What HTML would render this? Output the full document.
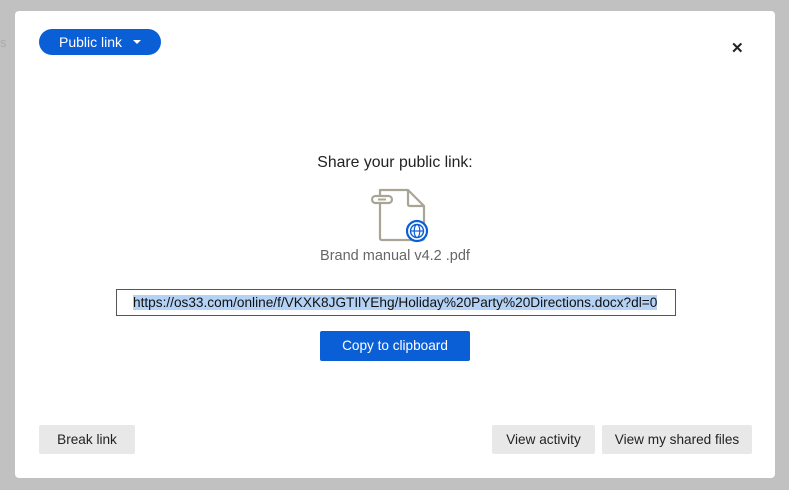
<!DOCTYPE html>
<html><head><meta charset="utf-8"><style>
html,body{margin:0;padding:0;}
body{width:789px;height:490px;background:#c1c1c1;position:relative;overflow:hidden;font-family:"Liberation Sans",sans-serif;}
.bgs{position:absolute;left:0;top:35px;color:#aaa;font-size:13px;}
.modal{position:absolute;left:15px;top:11px;width:760px;height:467px;background:#fff;border-radius:4px;}
.pill{position:absolute;left:24px;top:18px;width:122px;height:26px;border-radius:13px;background:#0b5fd6;color:#fff;font-size:14px;line-height:26px;}
.pill span{position:absolute;left:20px;}
.pill i{position:absolute;left:94px;top:11px;width:0;height:0;border-left:4px solid transparent;border-right:4px solid transparent;border-top:4px solid #fff;}
.x{position:absolute;left:716px;top:30px;font-size:15px;font-weight:bold;color:#222;line-height:16px;}
.t{position:absolute;left:0;width:760px;text-align:center;}
.url{position:absolute;left:101px;top:278px;width:560px;height:27px;border:1px solid #555;box-sizing:border-box;font-size:13.65px;line-height:25px;color:#111;}
.url span{background:#b4d2f5;margin-left:16px;}
.copy{position:absolute;left:305px;top:320px;width:150px;height:30px;background:#0b5fd6;color:#fff;font-size:13.6px;line-height:30px;text-align:center;border-radius:2px;}
.btn{position:absolute;top:414px;height:29px;background:#e8e8e8;color:#222;font-size:13.6px;line-height:29px;text-align:center;border-radius:2px;}
</style></head><body>
<div class="bgs">s</div>
<div class="modal">
<div class="pill"><span>Public link</span><i></i></div>
<div class="x">✕</div>
<div class="t" style="top:143px;font-size:15.8px;color:#222;">Share your public link:</div>
<svg style="position:absolute;left:355px;top:174px" width="60" height="60" viewBox="0 0 60 60">
<path d="M10 5 H38 L54 21 V53 Q54 55 52 55 H12 Q10 55 10 53 Z" fill="none" stroke="#a8a596" stroke-width="2.2" stroke-linejoin="round"/>
<path d="M38 5 V19 Q38 21 40 21 H54" fill="none" stroke="#a8a596" stroke-width="2.2"/>
<rect x="2" y="11" width="20" height="7" rx="3.5" fill="#fff" stroke="#a8a596" stroke-width="2.2"/>
<line x1="8" y1="14.5" x2="16" y2="14.5" stroke="#a8a596" stroke-width="2"/>
<circle cx="47" cy="46" r="10" fill="#fff" stroke="#0b5fd6" stroke-width="2.2"/>
<circle cx="47" cy="46" r="6.5" fill="none" stroke="#0b5fd6" stroke-width="1.4"/>
<ellipse cx="47" cy="46" rx="2.8" ry="6.5" fill="none" stroke="#0b5fd6" stroke-width="1.2"/>
<line x1="40.5" y1="46" x2="53.5" y2="46" stroke="#0b5fd6" stroke-width="1.2"/>
</svg>
<div class="t" style="top:237px;font-size:14.5px;color:#666;">Brand manual v4.2 .pdf</div>
<div class="url"><span>https://os33.com/online/f/VKXK8JGTIlYEhg/Holiday%20Party%20Directions.docx?dl=0</span></div>
<div class="copy">Copy to clipboard</div>
<div class="btn" style="left:24px;width:96px;">Break link</div>
<div class="btn" style="left:477px;width:103px;">View activity</div>
<div class="btn" style="left:587px;width:150px;">View my shared files</div>
</div>
</body></html>
